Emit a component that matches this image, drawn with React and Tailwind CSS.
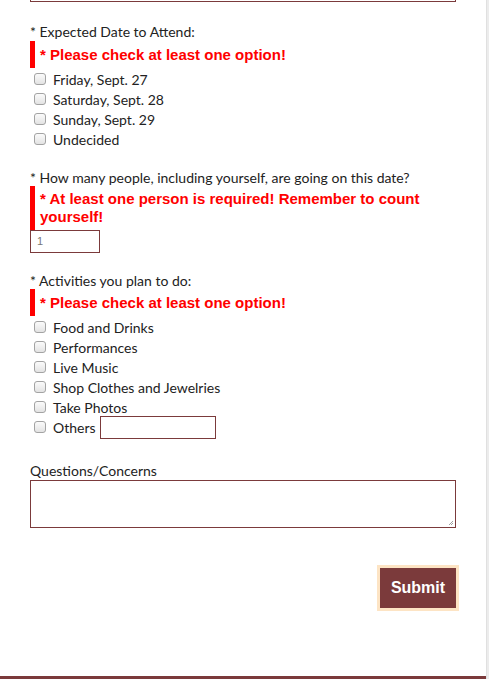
import React from "react";

const comic = { fontFamily: '"Comic Sans MS", Lato, "Noto Sans", sans-serif' };

function Box() {
  return (
    <span className="inline-block w-[12px] h-[12px] shrink-0 rounded-[3px] border border-[#a3a3a3] bg-gradient-to-b from-[#fbfbfb] to-[#e3e3e3]" />
  );
}

function Check({ label, children }) {
  return (
    <label className="flex items-center h-[20px] pl-[4px] text-[14px] text-[#222]">
      <Box />
      <span className="ml-[7px]">{label}</span>
      {children}
    </label>
  );
}

function Err({ children, single }) {
  return (
    <div
      className={
        (single ? "pt-[5px] " : "pt-[4px] ") +
        "border-l-[5px] border-[#ff0000] pl-[5px] pb-[4px] text-[15px] leading-[18px] font-bold text-[#ff0000] [font-family:'Liberation_Sans',Arial,sans-serif]"
      }
    >
      {children}
    </div>
  );
}

export default function App() {
  return (
    <div className="flex w-[489px] h-[679px] bg-white overflow-hidden">
      <div className="w-[486px] h-[679px] flex flex-col border-b-[3px] border-[#7b3a3b]" style={comic}>
        <div className="ml-[30px] w-[426px] h-[2px] border-x border-b border-[#7b3a3b]" />
        <div className="px-[30px]">
          <div className="mt-[21px] h-[18px] leading-[18px] text-[14px] text-[#222]">* Expected Date to Attend:</div>
          <Err single>* Please check at least one option!</Err>
          <div className="mt-[1px]">
            <Check label="Friday, Sept. 27" />
            <Check label="Saturday, Sept. 28" />
            <Check label="Sunday, Sept. 29" />
            <Check label="Undecided" />
          </div>

          <div className="mt-[20px] h-[17px] leading-[17px] text-[14px] text-[#222]">* How many people, including yourself, are going on this date?</div>
          <Err>* At least one person is required! Remember to count yourself!</Err>
          <div className="w-[70px] h-[23px] border border-[#7b3a3b] text-[11px] leading-[21px] pl-[6px] text-[#777] [font-family:'Liberation_Sans',Arial,sans-serif]">1</div>

          <div className="mt-[19px] h-[17px] leading-[17px] text-[14px] text-[#222]">* Activities you plan to do:</div>
          <Err single>* Please check at least one option!</Err>
          <div className="mt-[1px]">
            <Check label="Food and Drinks" />
            <Check label="Performances" />
            <Check label="Live Music" />
            <Check label="Shop Clothes and Jewelries" />
            <Check label="Take Photos" />
            <Check label="Others">
              <span className="ml-[4px] w-[116px] h-[23px] border border-[#7b3a3b] inline-block" />
            </Check>
          </div>

          <div className="mt-[25px] h-[17px] leading-[17px] text-[14px] text-[#222]">Questions/Concerns</div>
          <div className="mt-[1px] w-[426px] h-[48px] border border-[#7b3a3b] relative">
            <svg className="absolute right-[1px] bottom-[1px]" width="6" height="6" viewBox="0 0 6 6">
              <path d="M5 1 L1 5 M5 3 L3 5" stroke="#888" strokeWidth="0.8" />
            </svg>
          </div>

          <div className="flex justify-end mt-[37px] mr-[-3px]">
            <button className="w-[82px] h-[46px] border-[3px] border-[#fde4c4] bg-[#7b3a3b] text-white font-bold text-[16px] [font-family:'Liberation_Sans',Arial,sans-serif]">
              Submit
            </button>
          </div>
        </div>
      </div>
      <div className="w-[3px] h-[679px] bg-[#ececec] border-l border-[#e0e0e0]" />
    </div>
  );
}
